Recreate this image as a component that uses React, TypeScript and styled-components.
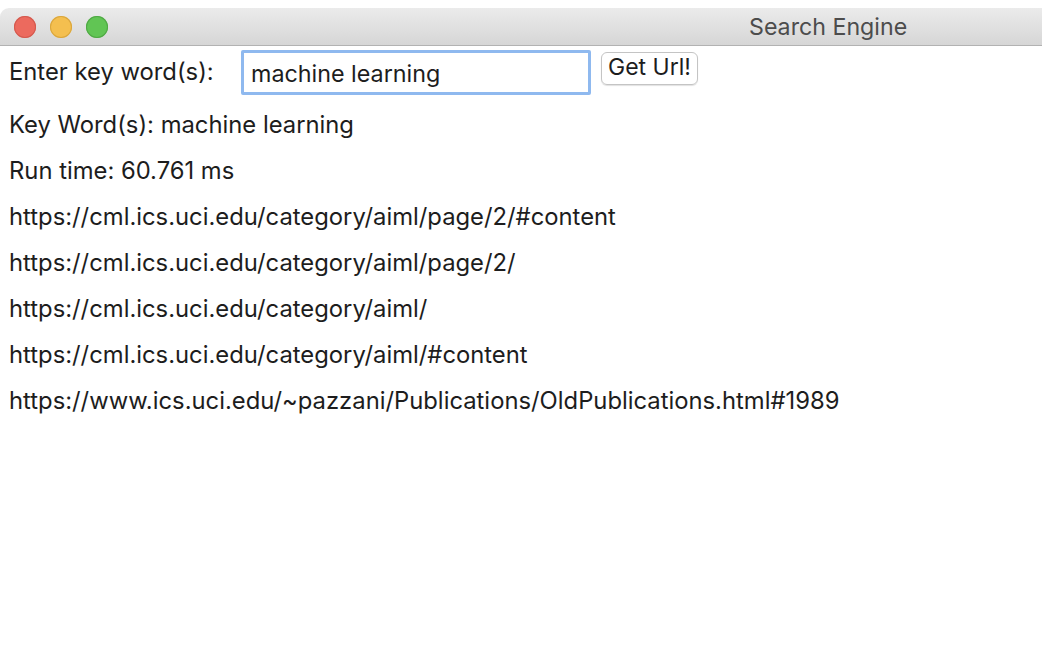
import React from "react";
import styled, { createGlobalStyle } from "styled-components";

const Global = createGlobalStyle`
  html, body { margin: 0; padding: 0; background: #ffffff; }
  body { font-family: Inter, "Liberation Sans", Arial, sans-serif; color: #1d1d1d; }
`;

const Window = styled.div`
  width: 1042px;
  height: 648px;
  padding-top: 8px;
  box-sizing: border-box;
  display: flex;
  flex-direction: column;
  background: #ffffff;
  overflow: hidden;
`;

const TitleBar = styled.div`
  height: 37px;
  display: flex;
  align-items: center;
  background: linear-gradient(#ebebeb, #d6d6d6);
  border-bottom: 1px solid #b2b2b2;
  border-top-left-radius: 9px;
`;

const Lights = styled.div`
  display: flex;
  gap: 14px;
  padding-left: 14px;
`;

const Light = styled.span<{ $fill: string; $edge: string }>`
  width: 22px;
  height: 22px;
  border-radius: 50%;
  background: ${(p) => p.$fill};
  box-shadow: inset 0 0 0 1px ${(p) => p.$edge};
`;

const Title = styled.div`
  margin-left: 641px;
  font-size: 23.2px;
  color: #4c4c4c;
`;

const Content = styled.div`
  display: flex;
  flex-direction: column;
  padding-left: 9px;
`;

const InputRow = styled.div`
  display: flex;
  align-items: flex-start;
  padding-top: 4px;
  height: 52px;
`;

const Label = styled.div`
  font-size: 23.8px;
  width: 232px;
  padding-top: 7px;
`;

const Field = styled.div`
  box-sizing: border-box;
  width: 350px;
  height: 45px;
  border: 3px solid #8fb9ef;
  border-radius: 2px;
  display: flex;
  align-items: center;
  padding-left: 7px;
  padding-top: 2px;
  font-size: 23.3px;
`;

const Button = styled.div`
  margin-left: 10px;
  margin-top: 2px;
  width: 97px;
  height: 33px;
  box-sizing: border-box;
  border: 1px solid #c4c4c4;
  border-radius: 6px;
  display: flex;
  align-items: center;
  justify-content: center;
  padding-bottom: 3px;
  font-size: 23px;
  box-shadow: 0 1px 1px rgba(0, 0, 0, 0.12);
`;

const Line = styled.div`
  font-size: 23.8px;
  height: 46px;
  line-height: 46px;
`;

const lines = [
  "Key Word(s): machine learning",
  "Run time: 60.761 ms",
  "https://cml.ics.uci.edu/category/aiml/page/2/#content",
  "https://cml.ics.uci.edu/category/aiml/page/2/",
  "https://cml.ics.uci.edu/category/aiml/",
  "https://cml.ics.uci.edu/category/aiml/#content",
  "https://www.ics.uci.edu/~pazzani/Publications/OldPublications.html#1989",
];

export default function App() {
  return (
    <>
      <Global />
      <Window>
        <TitleBar>
          <Lights>
            <Light $fill="#ec6a5e" $edge="#d35a4f" />
            <Light $fill="#f4bf4f" $edge="#d9a63e" />
            <Light $fill="#61c554" $edge="#50a845" />
          </Lights>
          <Title>Search Engine</Title>
        </TitleBar>
        <Content>
          <InputRow>
            <Label>Enter key word(s):</Label>
            <Field>machine learning</Field>
            <Button>Get Url!</Button>
          </InputRow>
          {lines.map((l) => (
            <Line key={l}>{l}</Line>
          ))}
        </Content>
      </Window>
    </>
  );
}
